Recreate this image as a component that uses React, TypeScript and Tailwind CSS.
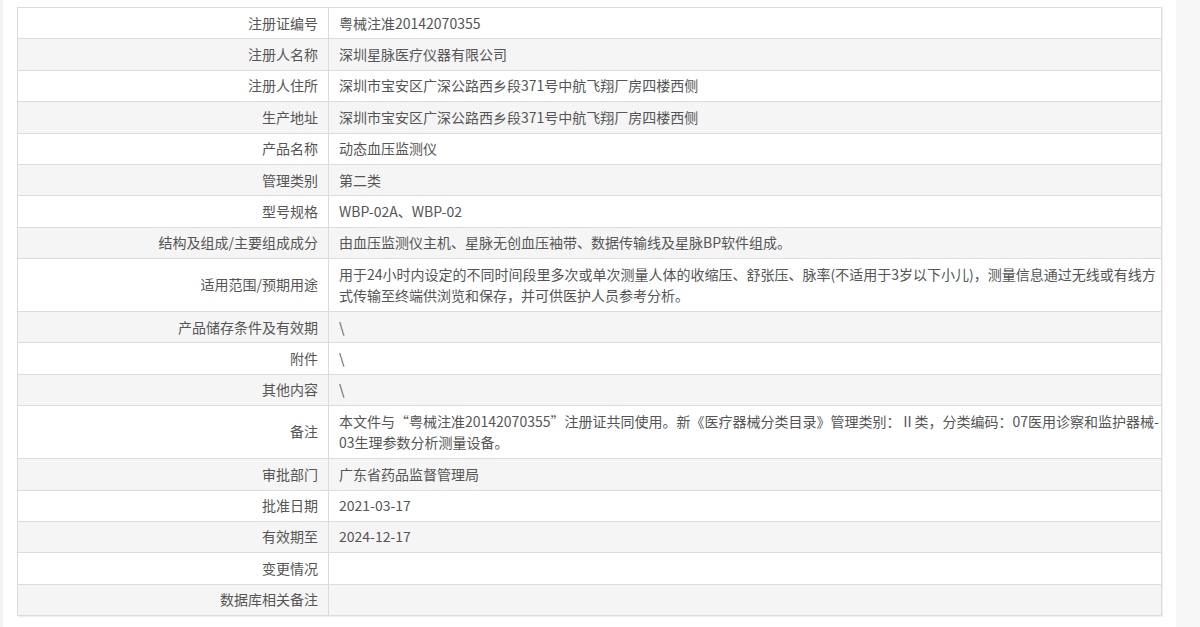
const rows: { label: string; value: React.ReactNode }[] = [
  { label: "注册证编号", value: "粤械注准20142070355" },
  { label: "注册人名称", value: "深圳星脉医疗仪器有限公司" },
  { label: "注册人住所", value: "深圳市宝安区广深公路西乡段371号中航飞翔厂房四楼西侧" },
  { label: "生产地址", value: "深圳市宝安区广深公路西乡段371号中航飞翔厂房四楼西侧" },
  { label: "产品名称", value: "动态血压监测仪" },
  { label: "管理类别", value: "第二类" },
  { label: "型号规格", value: "WBP-02A、WBP-02" },
  { label: "结构及组成/主要组成成分", value: "由血压监测仪主机、星脉无创血压袖带、数据传输线及星脉BP软件组成。" },
  {
    label: "适用范围/预期用途",
    value: (
      <>
        用于24小时内设定的不同时间段里多次或单次测量人体的收缩压、舒张压、脉率(不适用于3岁以下小儿)，测量信息通过无线或有线方
        <br />
        式传输至终端供浏览和保存，并可供医护人员参考分析。
      </>
    ),
  },
  { label: "产品储存条件及有效期", value: "\\" },
  { label: "附件", value: "\\" },
  { label: "其他内容", value: "\\" },
  {
    label: "备注",
    value: (
      <>
        本文件与“粤械注准20142070355”注册证共同使用。新《医疗器械分类目录》管理类别：Ⅱ类，分类编码：07医用诊察和监护器械-
        <br />
        03生理参数分析测量设备。
      </>
    ),
  },
  { label: "审批部门", value: "广东省药品监督管理局" },
  { label: "批准日期", value: "2021-03-17" },
  { label: "有效期至", value: "2024-12-17" },
  { label: "变更情况", value: "" },
  { label: "数据库相关备注", value: "" },
];

export default function App() {
  return (
    <div
      className="flex h-[627px] w-[1200px] bg-white text-[14px] text-[#555]"
      style={{ fontFamily: '"Noto Sans CJK SC", "Noto Sans", sans-serif' }}
    >
      <div className="w-[3px] bg-[#f3f3f3]" />
      <div className="flex-1 px-[14px] pt-[7px]">
        <table className="w-full table-fixed border-collapse border border-[#d9d9d9] shadow-[1px_1px_1px_rgba(0,0,0,0.06)]">
          <colgroup>
            <col className="w-[311px]" />
            <col />
          </colgroup>
          <tbody>
            {rows.map((row, i) => (
              <tr key={row.label} className={i % 2 === 1 ? "bg-[#f5f5f5]" : "bg-white"}>
                <td className="border border-[#dcdcdc] px-[10px] py-[4.5px] text-right leading-[21.4px]">
                  {row.label}
                </td>
                <td className="border border-[#dcdcdc] px-[10px] py-[4.5px] text-left leading-[21.4px] whitespace-nowrap">
                  {row.value}
                </td>
              </tr>
            ))}
          </tbody>
        </table>
      </div>
      <div className="w-[24px] bg-[#f7f7f7]" />
    </div>
  );
}
